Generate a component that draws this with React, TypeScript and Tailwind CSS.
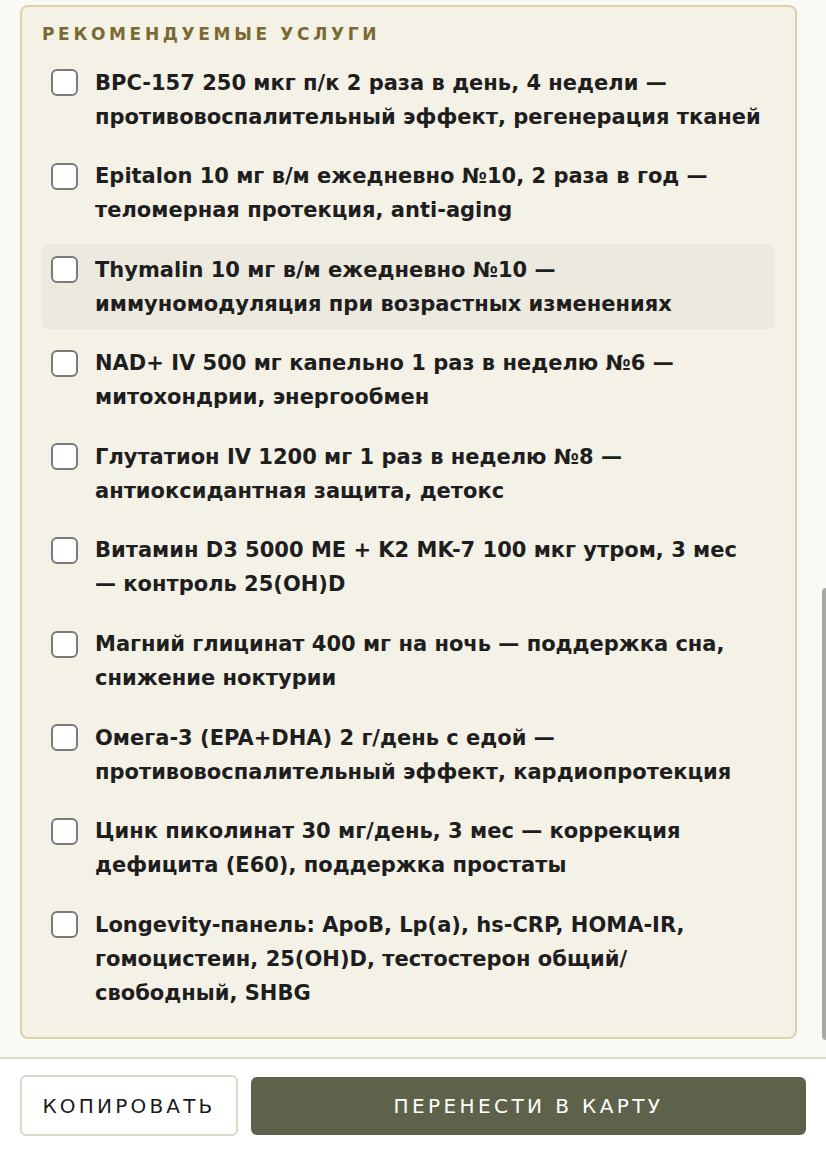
const services = [
  "BPC-157 250 мкг п/к 2 раза в день, 4 недели — противовоспалительный эффект, регенерация тканей",
  "Epitalon 10 мг в/м ежедневно №10, 2 раза в год — теломерная протекция, anti-aging",
  "Thymalin 10 мг в/м ежедневно №10 — иммуномодуляция при возрастных изменениях",
  "NAD+ IV 500 мг капельно 1 раз в неделю №6 — митохондрии, энергообмен",
  "Глутатион IV 1200 мг 1 раз в неделю №8 — антиоксидантная защита, детокс",
  "Витамин D3 5000 МЕ + K2 MK-7 100 мкг утром, 3 мес — контроль 25(OH)D",
  "Магний глицинат 400 мг на ночь — поддержка сна, снижение ноктурии",
  "Омега-3 (EPA+DHA) 2 г/день с едой — противовоспалительный эффект, кардиопротекция",
  "Цинк пиколинат 30 мг/день, 3 мес — коррекция дефицита (E60), поддержка простаты",
  "Longevity-панель: ApoB, Lp(a), hs-CRP, HOMA-IR, гомоцистеин, 25(OH)D, тестостерон общий/свободный, SHBG",
];

export default function App() {
  return (
    <div className="h-[1150px] w-[826px] flex flex-col bg-white font-['DejaVu_Sans','Noto_Sans',sans-serif] overflow-hidden">
      <div className="relative h-[1059px] shrink-0 bg-[#f9f9f5] border-b-2 border-[#dcd8c8] px-5 pt-[5px]">
        <div className="w-[777px] rounded-lg border-2 border-[#dcd2aa] bg-[#f4f1e6] px-5 pt-[15px] pb-[19px]">
          <h2 className="text-[17px] leading-6 font-bold tracking-[0.215em] text-[#7a6a32]">РЕКОМЕНДУЕМЫЕ УСЛУГИ</h2>
          <ul className="mt-[11px] flex flex-col gap-[8.6px]">
            {services.map((s, i) => (
              <li
                key={i}
                className={`flex items-start gap-[17px] rounded-md pl-[9px] pr-[13px] py-[8.5px] ${i === 2 ? "bg-[#ecE9de]" : ""}`}
              >
                <span className="mt-[3.5px] h-[27px] w-[27px] shrink-0 rounded-[6px] border-2 border-[#7a7a7a] bg-white" />
                <span className="text-[21px] leading-[34px] font-bold text-[#1e1e1e]">{s}</span>
              </li>
            ))}
          </ul>
        </div>
        <div className="absolute right-0 top-[588px] h-[452px] w-[4px] rounded-l-sm bg-[#a9a9a9]" />
      </div>
      <div className="flex gap-[13px] px-5 pt-[16px]">
        <button className="h-[61px] w-[218px] rounded-md border-2 border-[#dcd8c8] bg-white text-[20px] tracking-[0.16em] text-[#1a1a1a]">
          КОПИРОВАТЬ
        </button>
        <button className="mt-[2px] h-[58px] flex-1 rounded-md bg-[#5e624b] text-[20px] tracking-[0.17em] text-white">
          ПЕРЕНЕСТИ В КАРТУ
        </button>
      </div>
    </div>
  );
}
